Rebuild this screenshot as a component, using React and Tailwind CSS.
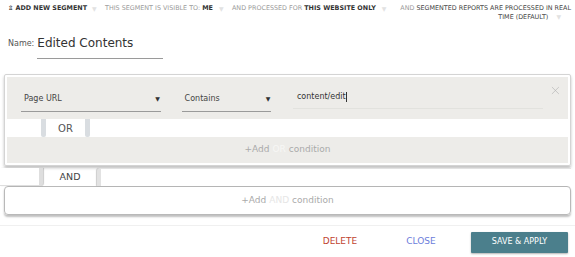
import { X } from 'lucide-react';

const font = { fontFamily: '"DejaVu Sans", "Open Sans", sans-serif' };

function Caret({ className = '' }) {
  return <span className={`inline-block text-[6px] leading-none ${className}`}>▼</span>;
}

function Select({ label, width }) {
  return (
    <div className={`${width} h-[26px] flex items-center justify-between pl-[3px] pr-[1px] border-b border-[#9a9a9a]`}>
      <span className="text-[8px] text-[#444]">{label}</span>
      <Caret className="text-[#333] text-[4px]" />
    </div>
  );
}

export default function App() {
  return (
    <div className="relative w-[575px] h-[257px] bg-white overflow-hidden text-[#333]" style={font}>
      {/* top bar */}
      <div className="flex items-start pt-[4px] pl-[8px] text-[6.4px] leading-[9px] uppercase">
        <div className="w-[97px] flex items-center gap-[5px]">
          <span className="font-bold text-[#333]">⇫ Add new segment</span>
          <Caret className="text-[#e2e2e2]" />
        </div>
        <div className="w-[127px] flex items-center gap-[6px]">
          <span className="text-[#9a9a9a]">This segment is visible to: <b className="text-[#333]">me</b></span>
          <Caret className="text-[#e2e2e2]" />
        </div>
        <div className="w-[161px] flex items-center gap-[6px]">
          <span className="text-[#9a9a9a]">And processed for <b className="text-[#333] font-semibold">this website only</b></span>
          <Caret className="text-[#e2e2e2]" />
        </div>
        <div className="w-[178px] text-right text-[#444]">
          <span className="text-[#9a9a9a]">And </span>segmented reports are processed in real<br />
          <span className="pr-[8px]">time (default)</span>
          <Caret className="text-[#e2e2e2] mr-[10px]" />
        </div>
      </div>

      {/* name */}
      <div className="flex items-end pl-[8px] mt-[14px]">
        <span className="text-[8px] text-[#555] pb-[9px]">Name:</span>
        <div className="ml-[3px] w-[126px] border-b border-[#9a9a9a] pb-[8px] text-[12px] leading-[14px] text-[#333]">Edited Contents</div>
      </div>

      {/* OR block */}
      <div className="mx-[4px] mt-[15px] border border-[#d4d4d4] rounded-[2px] p-[2px] shadow-[0_2px_3px_rgba(0,0,0,0.25)]">
        <div className="h-[42px] bg-[#edece9] flex items-start pt-[9px] pl-[14px] pr-[6px]">
          <Select label="Page URL" width="w-[142px]" />
          <div className="w-[21px]" />
          <Select label="Contains" width="w-[91px]" />
          <div className="w-[22px]" />
          <div className="w-[254px] h-[23px] flex items-center pl-[4px] border-b border-[#e2e2de]">
            <span className="text-[8px] text-[#333]">content/edit</span>
            <span className="w-px h-[10px] bg-[#333]" />
          </div>
          <X className="ml-[6px] -mt-[2px] text-[#b0b0b0]" size={13} strokeWidth={1.2} />
        </div>
        <div className="h-[18px] flex items-stretch pl-[34px]">
          <div className="w-[5px] bg-[#d9dde1] rounded-b-[2px]" />
          <div className="w-[39px] flex items-center justify-center text-[10px] text-[#555]">OR</div>
          <div className="w-[5px] bg-[#d9dde1] rounded-b-[2px]" />
        </div>
        <div className="h-[26px] bg-[#edece9] flex items-center justify-center text-[9px] text-[#aaa]">
          +Add<span className="text-[#f7f7f5] mx-[3px]">OR</span>condition
        </div>
      </div>

      {/* AND row */}
      <div className="h-[18px] mt-[2px] flex items-stretch">
        <div className="w-[43px] border-r-[4px] border-b border-[#dedede] rounded-br-[3px] bg-white shadow-[1px_0_1px_rgba(0,0,0,0.2)]" />
        <div className="w-[54px] flex items-center justify-center text-[9.5px] text-[#444]">AND</div>
        <div className="flex-1 mr-[4px] border-l-[4px] border-t border-[#e2e2e2] rounded-tl-[3px] bg-white shadow-[-1px_0_1px_rgba(0,0,0,0.2)]" />
      </div>
      <div className="mx-[4px] h-[29px] border border-[#b9b9b9] rounded-[4px] flex items-center justify-center text-[9px] text-[#aaa] shadow-[0_2px_2px_rgba(0,0,0,0.25)]">
        +Add<span className="text-[#e6e6e6] mx-[3px]">AND</span>condition
      </div>

      {/* footer */}
      <div className="mt-[10px] border-t border-[#f0f0f0] h-[33px] flex items-center pr-[7px]">
        <div className="flex-1" />
        <button className="w-[50px] text-[9px] text-[#c0432f] uppercase">Delete</button>
        <button className="ml-[33px] w-[46px] text-[9px] text-[#6b7ddb] uppercase">Close</button>
        <button className="ml-[27px] w-[97px] h-[21px] bg-[#4b7f8c] text-white text-[8px] uppercase rounded-[1px] shadow-[0_1px_2px_rgba(0,0,0,0.3)]">Save &amp; Apply</button>
      </div>
      <div className="border-t border-[#e4e4e4]" />
    </div>
  );
}
